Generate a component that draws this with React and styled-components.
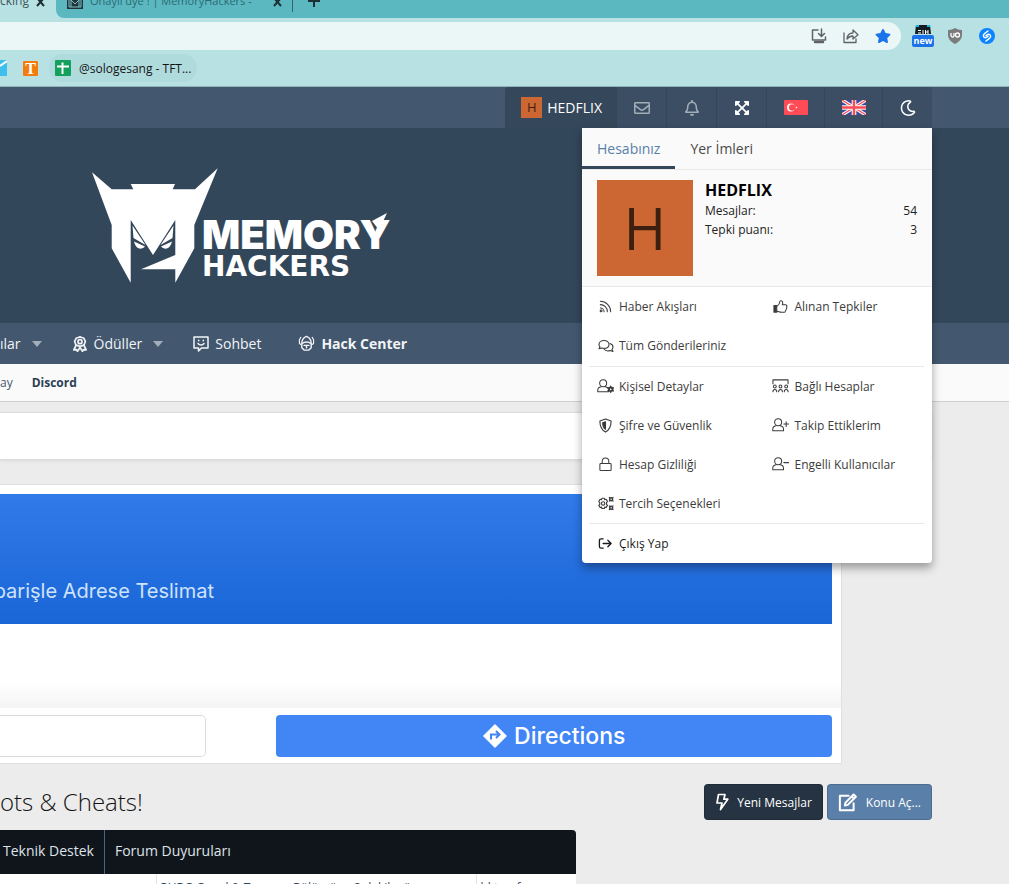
import React from 'react';
import styled, { createGlobalStyle } from 'styled-components';
import {
  FaRegEnvelope,
  FaRegBell,
  FaExpandArrowsAlt,
  FaRegMoon,
  FaStar
} from 'react-icons/fa';

const uiFont = '"Open Sans", "Noto Sans", sans-serif';
const adFont = 'Inter, Roboto, sans-serif';

const GlobalStyle = createGlobalStyle`
  * {
    box-sizing: border-box;
  }

  body {
    margin: 0;
    background: #ececec;
    color: #141414;
    font-family: ${uiFont};
    font-size: 12px;
    overflow: hidden;
  }

  a {
    color: inherit;
    text-decoration: none;
  }

  button,
  input {
    border: 0;
    background: none;
    color: inherit;
    font: inherit;
    padding: 0;
  }

  svg {
    display: block;
    flex: none;
  }
`;

/* Browser */

const TabStrip = styled.div`
  display: flex;
  height: 18px;
  overflow: hidden;
  background: #b8e1e4;
`;

const ActiveTab = styled.div`
  display: flex;
  flex: none;
  align-items: flex-start;
  justify-content: space-between;
  width: 56px;
  padding-right: 11px;
  line-height: 16px;
`;

const TabTitle = styled.span`
  height: 16px;
  margin-top: -7px;
  color: ${props => (props.$active ? '#40565a' : '#2c6a72')};
  font-size: ${props => (props.$active ? 12 : 11)}px;
  line-height: 16px;
  white-space: nowrap;
`;

const TabRest = styled.div`
  display: flex;
  flex: 1;
  align-items: flex-start;
  gap: 7px;
  padding-left: 11px;
  border-bottom-left-radius: 8px;
  background: #5bb8c1;
`;

const TabEdge = styled.div`
  width: 1px;
  height: 12px;
  margin: 0 8px 0 3px;
  background: #31646b;
`;

const TabClose = styled.button`
  margin-left: ${props => (props.$spaced ? '14px' : '0')};
`;

const Toolbar = styled.div`
  display: flex;
  align-items: center;
  gap: 11px;
  padding: 4px 11px 0 0;
  background: #b8e1e4;
`;

const AddressBar = styled.div`
  display: flex;
  flex: 1;
  align-items: center;
  gap: 16px;
  height: 28px;
  padding-right: 10px;
  border-radius: 0 14px 14px 0;
  background: #ebf7f7;
`;

const AddressInput = styled.input`
  flex: 1;
  min-width: 0;
  height: 28px;
`;

const Extensions = styled.div`
  display: flex;
  align-items: center;
  gap: 10px;
`;

const Extension = styled.button`
  display: flex;
  flex-direction: column;
  align-items: center;
  width: 22px;
`;

const NewBadge = styled.span`
  width: 22px;
  border-radius: 2px;
  background: #1a73e8;
  color: white;
  font-size: 9px;
  font-weight: bold;
  line-height: 12px;
`;

const Bookmarks = styled.div`
  display: flex;
  align-items: center;
  height: 37px;
  border-bottom: 1px solid #8fb3b9;
  background: #b8e1e4;
`;

const OrangeBookmark = styled.a`
  width: 15px;
  height: 15px;
  margin: 0 11px 0 16px;
  border-radius: 1px;
  background: #f57c0c;
  color: white;
  font-family: "Liberation Serif", serif;
  font-size: 16px;
  font-weight: bold;
  line-height: 15px;
  text-align: center;
`;

const Bookmark = styled.a`
  display: flex;
  align-items: center;
  gap: 8px;
  height: 28px;
  padding: 0 6px;
  border-radius: 14px;
  background: #b0dbdd;
`;

/* Forum header */

const StaffBar = styled.div`
  display: flex;
  position: relative;
  justify-content: flex-end;
  height: 41px;
  padding-right: 77px;
  background: #43586f;
`;

const StaffGroup = styled.div`
  display: flex;
  border-radius: 4px 4px 0 0;
  background: #3b4e63;
`;

const StaffCell = styled.button`
  display: flex;
  align-items: center;
  gap: 5px;
  padding: 0 16px;
  border-right: 1px solid #34465a;
  color: ${props => (props.$bright ? 'white' : '#a3aeb9')};

  &:last-child {
    border-right: 0;
  }
`;

const UserCell = styled(StaffCell)`
  padding-right: 14px;
  border-radius: 4px 0 0 0;
  background: #35485b;
  color: white;
  font-size: 14px;
`;

const IconBox = styled.span`
  display: flex;
  justify-content: center;
  width: ${props => props.$width || 17}px;
`;

const Avatar = styled.span`
  flex: none;
  width: ${props => props.$size}px;
  height: ${props => props.$size}px;
  background: #cc6633;
  color: #3d1f0f;
  font-size: ${props => (props.$size > 50 ? 58 : 13)}px;
  line-height: ${props => props.$size}px;
  text-align: center;
`;

const Header = styled.header`
  display: flex;
  align-items: flex-start;
  height: 195px;
  padding: 40px 92px;
  background: #33475b;
`;

const Nav = styled.nav`
  display: flex;
  align-items: center;
  gap: 30px;
  height: 41px;
  overflow: hidden;
  background: #43586f;
  color: #f2f4f6;
  font-size: 14px;
`;

const NavItem = styled.a`
  display: flex;
  align-items: center;
  gap: 6px;
  padding-right: ${props => (props.$plain ? '7px' : '0')};
  font-weight: ${props => (props.$bold ? 'bold' : 'normal')};
`;

const Caret = styled.span`
  margin-left: 5px;
  border: 5px solid transparent;
  border-top: 6px solid #a3aeb9;
  border-bottom: 0;
`;

const SubNav = styled.nav`
  display: flex;
  align-items: center;
  gap: 19px;
  height: 38px;
  border-bottom: 1px solid #d0d0d0;
  background: #fafafa;
  color: #43586f;
`;

const SubLink = styled.a`
  color: ${props => (props.$bold ? '#2b3f54' : 'inherit')};
  font-weight: ${props => (props.$bold ? 'bold' : 'normal')};
`;

/* Account menu */

const Menu = styled.section`
  position: absolute;
  z-index: 2;
  top: 100%;
  right: 77px;
  width: 350px;
  border-radius: 0 0 4px 4px;
  background: white;
  box-shadow: 0 5px 10px rgba(0, 0, 0, 0.35);
  color: #3c3c3c;
`;

const MenuTabs = styled.div`
  display: flex;
  height: 42px;
  border-bottom: 1px solid #e8e8e8;
  background: #fafafa;
`;

const MenuTab = styled.button`
  height: 41px;
  padding: 2px 15px 0;
  border-bottom: 3px solid ${props => (props.$active ? '#33475b' : 'transparent')};
  color: ${props => (props.$active ? '#577fa8' : '#4a4a4a')};
  font-size: 14px;
`;

const Profile = styled.div`
  display: flex;
  gap: 12px;
  padding: 10px 15px;
  border-bottom: 1px solid #e8e8e8;
  background: #fafafa;
`;

const ProfileInfo = styled.div`
  flex: 1;
  color: #222;
`;

const ProfileName = styled.h2`
  margin: 0;
  color: black;
  font-size: 16px;
  line-height: 21px;
`;

const Stat = styled.div`
  display: flex;
  justify-content: space-between;
  line-height: 19px;
`;

const MenuGroup = styled.div`
  display: grid;
  grid-template-columns: 11fr 10fr;
  margin: 0 8px 0 7px;
  padding-bottom: ${props => (props.$divided ? '0' : '1px')};
  border-top: ${props => (props.$divided ? '1px solid #e8e8e8' : '0')};
`;

const MenuLink = styled.a`
  display: flex;
  grid-column: ${props => (props.$full ? '1 / -1' : 'auto')};
  align-items: center;
  gap: 5px;
  height: 39px;
  padding-left: 8px;
  color: ${props => (props.$dark ? '#1c1c1c' : 'inherit')};
  white-space: nowrap;
`;

/* Page body */

const Main = styled.main`
  padding: 10px 77px 0 0;
`;

const Notice = styled.div`
  height: 48px;
  border: 1px solid #dcdcdc;
  border-left: 0;
  background: white;
  box-shadow: 0 1px 3px rgba(0, 0, 0, 0.08);
`;

const Ad = styled.section`
  margin: 24px 90px 0 0;
  padding-top: 9px;
  border: 1px solid #e0e0e0;
  border-left: 0;
  background: white;
  font-family: ${adFont};
`;

const AdBanner = styled.div`
  display: flex;
  align-items: flex-end;
  height: 130px;
  margin-right: 9px;
  padding-bottom: 20px;
  background: linear-gradient(#317aea, #1a66d6);
`;

const AdText = styled.span`
  display: flex;
  justify-content: flex-end;
  width: 214px;
  overflow: hidden;
  color: #cfe3fb;
  font-size: 20px;
  line-height: 26px;
  white-space: nowrap;
`;

const AdFade = styled.div`
  height: 84px;
  background: linear-gradient(white 70%, #f4f4f4);
`;

const AdActions = styled.div`
  display: flex;
  gap: 70px;
  padding: 7px 9px 6px 0;
`;

const AdInput = styled.input`
  flex: 27 1 0;
  min-width: 0;
  height: 42px;
  border: 1px solid #dadce0;
  border-left: 0;
  border-radius: 0 5px 5px 0;
`;

const AdButton = styled.button`
  display: flex;
  flex: 73 1 0;
  align-items: center;
  justify-content: center;
  gap: 7px;
  height: 42px;
  border-radius: 4px;
  background: #4285f4;
  color: white;
  font-size: 23px;
  font-weight: 500;
`;

const TitleRow = styled.div`
  display: flex;
  align-items: center;
  gap: 4px;
  margin-top: 20px;
`;

const Title = styled.h1`
  flex: 1;
  margin: 0;
  font-size: 24px;
  font-weight: 300;
  line-height: 36px;
`;

const ActionButton = styled.button`
  display: flex;
  align-items: center;
  gap: 8px;
  height: 36px;
  padding: 0 10px;
  border: 1px solid rgba(0, 0, 0, 0.15);
  border-radius: 4px;
  background: ${props => (props.$primary ? '#263342' : '#5a7fa8')};
  color: white;
`;

const Columns = styled.div`
  display: grid;
  grid-template-columns: 1fr 336px;
  gap: 20px;
  margin-top: 10px;
`;

const ForumTabs = styled.div`
  display: flex;
  height: 44px;
  border-radius: 0 4px 0 0;
  background: #10151c;
  color: #dfe3e8;
  font-size: 14px;
`;

const ForumTab = styled.button`
  padding: 0 10px 3px ${props => (props.$first ? 3 : 10)}px;
  border-left: ${props => (props.$first ? '0' : '1px solid #3a6a92')};
`;

const Threads = styled.table`
  width: 100%;
  border-collapse: collapse;
  table-layout: fixed;
  background: white;
  color: #33475b;

  td {
    height: 28px;
    padding: 4px;
    border-left: 1px solid #e4e4e4;
    line-height: 16px;
    white-space: nowrap;
    overflow: hidden;
  }

  td:first-child {
    width: 156px;
    border-left: 0;
  }

  td:last-child {
    width: 100px;
  }
`;

const LineIcon = ({ size = 15, width = 1.1, box = 16, children }) => (
  <svg
    width={size}
    height={size}
    viewBox={`0 0 ${box} ${box}`}
    fill="none"
    stroke="currentColor"
    strokeWidth={width}
    strokeLinecap="round"
    strokeLinejoin="round"
    aria-hidden="true"
  >
    {children}
  </svg>
);

const Cross = () => (
  <svg width="9" height="8" viewBox="0 0 9 8" stroke="#1d3034" strokeWidth="2" aria-hidden="true">
    <path d="M1-2l7 8M8-2L1 6" />
  </svg>
);

const Person = () => (
  <g>
    <circle cx="6.500" cy="5.500" r="3.700" />
    <path d="M4.200 9.300C2 9.700.8 11 .8 13v1.500h11.400V13c0-2-1.200-3.300-3.400-3.700" />
  </g>
);

const RssIcon = () => (
  <LineIcon>
    <path d="M2.500 2.500c6 0 11 5 11 11M2.500 6c4.200 0 7.500 3.300 7.500 7.500" />
    <path d="M2.500 9.500a4 4 0 014 4" />
    <circle cx="3.300" cy="12.700" r="1" />
  </LineIcon>
);

const ThumbIcon = () => (
  <LineIcon>
    <path d="M4.500 7.500C7 5.500 7.300 4 7.500 2.200c1.800-.8 3 .3 2.900 2L10 6.200h3.500c1.500.3 1.600 1.500 1 2.200.5.8.3 1.700-.4 2.100.2.900-.1 1.600-.8 1.900 0 1.200-.6 1.800-1.800 1.800H9c-2 0-3-1-4.500-1" />
    <path d="M1 7h3v7H1z" fill="currentColor" />
  </LineIcon>
);

const CommentsIcon = () => (
  <LineIcon size={16}>
    <path d="M6 2.500c3 0 5 1.700 5 3.900s-2 3.900-5 3.900c-.8 0-1.500-.1-2.200-.4L1 10.800l1-2C1.300 8.100 1 7.300 1 6.400c0-2.200 2-3.900 5-3.900z" />
    <path d="M12 5.500c1.900.6 3 1.900 3 3.500 0 .9-.3 1.700-1 2.400l1 2-2.800-.9c-2.500.9-5.200.1-6.400-1.700" />
  </LineIcon>
);

const UserCogIcon = () => (
  <LineIcon size={17} box={18}>
    <Person />
    <circle cx="14.500" cy="12" r="1.900" strokeWidth="2" />
    <path
      d="M14.500 8.800v.5M14.500 14.700v.5M11.700 10.400l.5.300M16.800 13.300l.5.300M11.700 13.600l.5-.3M16.800 10.700l.5-.3"
      strokeWidth="1.600"
    />
  </LineIcon>
);

const GroupIcon = () => (
  <LineIcon size={17} box={18}>
    <path d="M1 6V2h16v4" />
    {[3, 9, 15].map(x => (
      <g key={x}>
        <circle cx={x} cy="9" r="1.500" />
        <path d={`M${x - 2} 14.500c0-3 4-3 4 0`} />
      </g>
    ))}
  </LineIcon>
);

const ShieldIcon = () => (
  <LineIcon width={1.2}>
    <path d="M8 1l6 2.200c0 5.800-1.500 9.300-6 11.800-4.500-2.500-6-6-6-11.800z" />
    <path d="M8 4v8C6 10.500 5 8 5 5.200z" fill="currentColor" />
  </LineIcon>
);

const UserPlusIcon = () => (
  <LineIcon size={17} box={18}>
    <Person />
    <path d="M12.500 7.500h5M15 5v5" />
  </LineIcon>
);

const UserMinusIcon = () => (
  <LineIcon size={17} box={18}>
    <Person />
    <path d="M12.500 7h5" />
  </LineIcon>
);

const LockIcon = () => (
  <LineIcon>
    <rect x="2" y="7" width="12" height="7.500" rx="1" />
    <path d="M4.500 7V4.500a3.500 3.500 0 017 0V7" />
  </LineIcon>
);

const CogsIcon = () => (
  <LineIcon size={17} box={18} width={1.2}>
    <path d="M5.200 3.500h2.600l.4 1.500 1.500-.5 1.400 2.200-1 1.300v2l1 1-1.400 2.300-1.500-.5-.4 1.500H5.200l-.4-1.500-1.500.5L1.900 11l1-1V8l-1-1.300 1.400-2.200 1.500.5z" />
    <circle cx="6.500" cy="9" r="1.800" />
    <circle cx="15" cy="4.500" r="1.600" strokeWidth="1.600" />
    <circle cx="15" cy="13.500" r="1.600" strokeWidth="1.600" />
    <path d="M13 2.500l.5.500M17 2.500l-.5.500M13 6.500l.5-.5M17 6.500l-.5-.5M13 11.500l.5.500M17 11.500l-.5.500M13 15.500l.5-.5M17 15.500l-.5-.5" />
  </LineIcon>
);

const LogoutIcon = () => (
  <LineIcon width={1.4}>
    <path d="M5.500 3H3.300C2 3 1.500 3.600 1.500 4.800v6.400C1.500 12.400 2 13 3.300 13h2.200M5.500 8H14M10.500 4.500L14 8l-3.500 3.500" />
  </LineIcon>
);

const AwardIcon = () => (
  <LineIcon size={16} width={1.7}>
    <path d="M8 .9l1.800.6 1.800.5.900 1.600.9 1.700-.6 1.700-.6 1.700-1.700.9L8 10.400l-2.500-.8-1.700-.9-.6-1.700-.6-1.700.9-1.700.9-1.600 1.800-.5z" />
    <circle cx="8" cy="5.700" r="2" />
    <path d="M4 9.500l-2.200 4.300 2.500-.2 1.200 1.700L8 11.500l2.500 3.800 1.200-1.700 2.500.2L12 9.500" />
  </LineIcon>
);

const ChatIcon = () => (
  <LineIcon size={16} width={1.5}>
    <path d="M1 1h14v11H8.500L5.500 15v-3H1z" />
    <path d="M5.700 4.200v.6M10.300 4.200v.6M5 7.500c1.500 2 4.500 2 6 0" />
  </LineIcon>
);

const HelmetIcon = () => (
  <LineIcon size={17} box={18} width={1.5}>
    <path d="M4 9.500C4 5 6 2.500 9 1.500c3 1 5 3.500 5 8v4L11.500 16h-5L4 13.500z" />
    <path d="M4.500 9c2.500-2.200 6.500-2.200 9 0M6.500 11h5M9 11v2.500" />
    <path d="M3 2.500L1.500 5v4l1.500 1M15 2.500L16.500 5v4L15 10" strokeWidth="1.200" />
  </LineIcon>
);

const TurkishFlag = () => (
  <svg width="24" height="15" viewBox="0 0 24 15" aria-hidden="true">
    <rect width="24" height="15" rx="1" fill="#ff4b55" />
    <circle cx="7" cy="7.500" r="4" fill="white" />
    <circle cx="8.200" cy="7.500" r="3.200" fill="#ff4b55" />
    <path d="M13.800 7.500l-2.400.8 1.500-2v2.400l-1.500-2z" fill="white" />
  </svg>
);

const BritishFlag = () => (
  <svg width="24" height="15" viewBox="0 0 24 15" aria-hidden="true">
    <rect width="24" height="15" fill="#41479b" />
    <path d="M0 0l24 15M24 0L0 15" stroke="#f5f5f5" strokeWidth="3.400" />
    <path d="M0 0l24 15M24 0L0 15" stroke="#ff4b55" strokeWidth="1.100" />
    <path d="M12 0v15M0 7.500h24" stroke="#f5f5f5" strokeWidth="4.600" />
    <path d="M12 0v15M0 7.500h24" stroke="#ff4b55" strokeWidth="2.400" />
  </svg>
);

const Logo = () => (
  <svg width="300" height="118" viewBox="0 0 300 118" fill="white" role="img" aria-label="Memory Hackers">
    <path d="M0 4.300L19.700 21.300H41.300L38.700 16H83L80.700 21.300H103L125.700.3 102.300 57v23.300l-19 34.400v-13.400H49L83.300 87V52L61 87 38.700 52v62.700l-19-34.400V57z" />
    <path d="M40.500 57.500L53.500 77 41.500 70zM81.500 57.500L68.500 77l12-7zM42 73.500L53 78.500c-4 4-9 2.500-11-5zM80 73.500L69 78.500c4 4 9 2.500 11-5z" />
    <text x="110" y="81" fontFamily="Inter, sans-serif" fontSize="40" fontWeight="900">
      MEMORY
    </text>
    <path d="M280 53l15-8-8 17z" />
    <text x="110" y="108" fontFamily="DejaVu Sans, sans-serif" fontSize="28" fontWeight="bold">
      HACKERS
    </text>
  </svg>
);

const menuGroups = [
  [
    { label: 'Haber Akışları', icon: RssIcon },
    { label: 'Alınan Tepkiler', icon: ThumbIcon },
    { label: 'Tüm Gönderileriniz', icon: CommentsIcon, full: true }
  ],
  [
    { label: 'Kişisel Detaylar', icon: UserCogIcon },
    { label: 'Bağlı Hesaplar', icon: GroupIcon },
    { label: 'Şifre ve Güvenlik', icon: ShieldIcon },
    { label: 'Takip Ettiklerim', icon: UserPlusIcon },
    { label: 'Hesap Gizliliği', icon: LockIcon },
    { label: 'Engelli Kullanıcılar', icon: UserMinusIcon },
    { label: 'Tercih Seçenekleri', icon: CogsIcon, full: true }
  ],
  [{ label: 'Çıkış Yap', icon: LogoutIcon, full: true, dark: true }]
];

const Browser = () => (
  <div>
    <TabStrip>
      <ActiveTab>
        <TabTitle $active>cking</TabTitle>
        <TabClose aria-label="Close tab">
          <Cross />
        </TabClose>
      </ActiveTab>
      <TabRest>
        <svg width="16" height="9" viewBox="0 0 16 9" aria-hidden="true">
          <path d="M0-6h16V9H0z" fill="#20343a" />
          <path d="M2-5v12h12V-5M4 7V0l4 4 4-4v7" fill="none" stroke="#7cc3ca" />
        </svg>
        <TabTitle>Onaylı üye ! | MemoryHackers -</TabTitle>
        <TabClose $spaced aria-label="Close tab">
          <Cross />
        </TabClose>
        <TabEdge />
        <button aria-label="New tab">
          <svg width="12" height="7" viewBox="0 0 12 7" stroke="#1d3034" strokeWidth="2" aria-hidden="true">
            <path d="M0 1h12M6 0v7" />
          </svg>
        </button>
      </TabRest>
    </TabStrip>
    <Toolbar>
      <AddressBar>
        <AddressInput aria-label="Address" />
        <button aria-label="Install">
          <LineIcon size={16} width={1.5}>
            <path d="M7 2H1.500v10h13V9M10.500 1v7M7.500 5.500l3 3 3-3" stroke="#5f6368" />
            <path d="M4 14h8" stroke="#5f6368" strokeWidth="2.500" />
          </LineIcon>
        </button>
        <button aria-label="Share">
          <LineIcon size={16} width={1.3}>
            <path d="M1 5v9.500h12V11M4 11c.3-4 2.500-6 6-6V2l5 4.700-5 4.300V8C7.500 8 5.500 9 4 11z" stroke="#5f6368" />
          </LineIcon>
        </button>
        <button aria-label="Bookmark">
          <FaStar size={16} color="#1a73e8" />
        </button>
      </AddressBar>
      <Extensions>
        <Extension>
          <svg width="16" height="10" viewBox="0 0 16 10" aria-hidden="true">
            <path d="M1 0h14l1 9H0z" fill="#101c22" />
            <path d="M1 1h3M12 1h3" stroke="#18b7e8" strokeWidth="2" />
            <path d="M3 5.500h3M3 8h3M8 5v4M10.500 5v4M13 5v4M10.500 7H13" stroke="white" />
          </svg>
          <NewBadge>new</NewBadge>
        </Extension>
        <Extension aria-label="Blocker">
          <svg width="16" height="16" viewBox="0 0 16 16" aria-hidden="true">
            <path d="M8 0c2 1.300 4 1.800 7 2v5c0 4-3 7-7 9-4-2-7-5-7-9V2c3-.2 5-.7 7-2z" fill="#7b7b7b" />
            <path d="M4 5v2.500a1.500 1.500 0 003 0V5" fill="none" stroke="white" strokeWidth="1.300" />
            <circle cx="10.500" cy="7" r="2" fill="none" stroke="white" strokeWidth="1.300" />
          </svg>
        </Extension>
        <Extension aria-label="Music finder">
          <svg width="16" height="16" viewBox="0 0 16 16" fill="none" aria-hidden="true">
            <circle cx="8" cy="8" r="8" fill="#0a84ff" />
            <path
              d="M9 3L5.500 5.600C3.200 7.400 4.800 10.800 7.500 9.400L9 8.300M7 13l3.500-2.600c2.300-1.800.7-5.200-2-3.800L7 7.700"
              stroke="white"
              strokeWidth="1.500"
              strokeLinecap="round"
            />
          </svg>
        </Extension>
      </Extensions>
    </Toolbar>
    <Bookmarks>
      <a href="#mail" aria-label="Mail">
        <svg width="7" height="16" viewBox="0 0 7 16" aria-hidden="true">
          <path d="M0 0h7v16H0z" fill="#3fbfee" />
          <path d="M0 6l7-5" stroke="white" strokeWidth="2" />
        </svg>
      </a>
      <OrangeBookmark href="#t">T</OrangeBookmark>
      <Bookmark href="#tft">
        <svg width="16" height="16" viewBox="0 0 16 16" aria-hidden="true">
          <rect width="16" height="16" rx="1" fill="#12a05c" />
          <path d="M2 6.500h12M7.500 2.500V14" stroke="white" strokeWidth="2" />
        </svg>
        @sologesang - TFT...
      </Bookmark>
    </Bookmarks>
  </div>
);

const AccountMenu = () => (
  <Menu>
    <MenuTabs>
      <MenuTab $active>Hesabınız</MenuTab>
      <MenuTab>Yer İmleri</MenuTab>
    </MenuTabs>
    <Profile>
      <Avatar $size={96}>H</Avatar>
      <ProfileInfo>
        <ProfileName>HEDFLIX</ProfileName>
        <Stat>
          <span>Mesajlar:</span>
          <span>54</span>
        </Stat>
        <Stat>
          <span>Tepki puanı:</span>
          <span>3</span>
        </Stat>
      </ProfileInfo>
    </Profile>
    {menuGroups.map((items, index) => (
      <MenuGroup key={index} $divided={index > 0}>
        {items.map(({ label, icon: Icon, full, dark }) => (
          <MenuLink key={label} href="#account" $full={full} $dark={dark}>
            <IconBox>
              <Icon />
            </IconBox>
            {label}
          </MenuLink>
        ))}
      </MenuGroup>
    ))}
  </Menu>
);

export default () => (
  <div>
    <GlobalStyle />
    <Browser />
    <StaffBar>
      <StaffGroup>
        <UserCell>
          <Avatar $size={21}>H</Avatar>
          HEDFLIX
        </UserCell>
        <StaffCell aria-label="Mesajlar">
          <IconBox>
            <FaRegEnvelope size={16} />
          </IconBox>
        </StaffCell>
        <StaffCell aria-label="Bildirimler">
          <IconBox>
            <FaRegBell size={16} />
          </IconBox>
        </StaffCell>
        <StaffCell $bright aria-label="Genişlet">
          <IconBox>
            <FaExpandArrowsAlt size={16} />
          </IconBox>
        </StaffCell>
        <StaffCell aria-label="Türkçe">
          <IconBox $width={25}>
            <TurkishFlag />
          </IconBox>
        </StaffCell>
        <StaffCell aria-label="English">
          <IconBox $width={25}>
            <BritishFlag />
          </IconBox>
        </StaffCell>
        <StaffCell $bright aria-label="Karanlık tema">
          <IconBox>
            <FaRegMoon size={16} />
          </IconBox>
        </StaffCell>
      </StaffGroup>
      <AccountMenu />
    </StaffBar>
    <Header>
      <Logo />
    </Header>
    <Nav>
      <NavItem href="#users">
        ılar
        <Caret />
      </NavItem>
      <NavItem href="#awards">
        <AwardIcon />
        Ödüller
        <Caret />
      </NavItem>
      <NavItem href="#chat" $plain>
        <ChatIcon />
        Sohbet
      </NavItem>
      <NavItem href="#hack" $bold>
        <HelmetIcon />
        Hack Center
      </NavItem>
    </Nav>
    <SubNav>
      <SubLink href="#ay">ay</SubLink>
      <SubLink href="#discord" $bold>
        Discord
      </SubLink>
    </SubNav>
    <Main>
      <Notice />
      <Ad>
        <AdBanner>
          <AdText>parişle Adrese Teslimat</AdText>
        </AdBanner>
        <AdFade />
        <AdActions>
          <AdInput aria-label="Adres" />
          <AdButton>
            <svg width="24" height="24" viewBox="0 0 24 24" aria-hidden="true">
              <path d="M12 .5L23.500 12 12 23.500.5 12z" fill="white" stroke="white" strokeLinejoin="round" />
              <path d="M8 15.500v-5h7M13 7l3.500 3.500L13 14" fill="none" stroke="#4285f4" strokeWidth="2" />
            </svg>
            Directions
          </AdButton>
        </AdActions>
      </Ad>
      <TitleRow>
        <Title>ots &amp; Cheats!</Title>
        <ActionButton $primary>
          <svg
            width="14"
            height="18"
            viewBox="0 0 14 18"
            fill="none"
            stroke="currentColor"
            strokeWidth="1.700"
            strokeLinejoin="round"
            aria-hidden="true"
          >
            <path d="M3.500 1.500h6.500L8.800 6.200h4L5.500 16.500l1.500-6.500H2z" />
          </svg>
          Yeni Mesajlar
        </ActionButton>
        <ActionButton>
          <LineIcon size={20} width={1.6}>
            <path d="M8.500 3H1.500v11.500h11V9M6 8.500L12.500 2l1.800 1.800L7.800 10.300 5.500 10.800zM11 3.500l1.800 1.800" />
          </LineIcon>
          Konu Aç...
        </ActionButton>
      </TitleRow>
      <Columns>
        <div>
          <ForumTabs>
            <ForumTab $first>Teknik Destek</ForumTab>
            <ForumTab>Forum Duyuruları</ForumTab>
          </ForumTabs>
          <Threads>
            <tbody>
              <tr>
                <td />
                <td>PUBG Genel &amp; Turnuva Bölümüne 2 dakika ü</td>
                <td>hl tarafı</td>
              </tr>
            </tbody>
          </Threads>
        </div>
      </Columns>
    </Main>
  </div>
);
